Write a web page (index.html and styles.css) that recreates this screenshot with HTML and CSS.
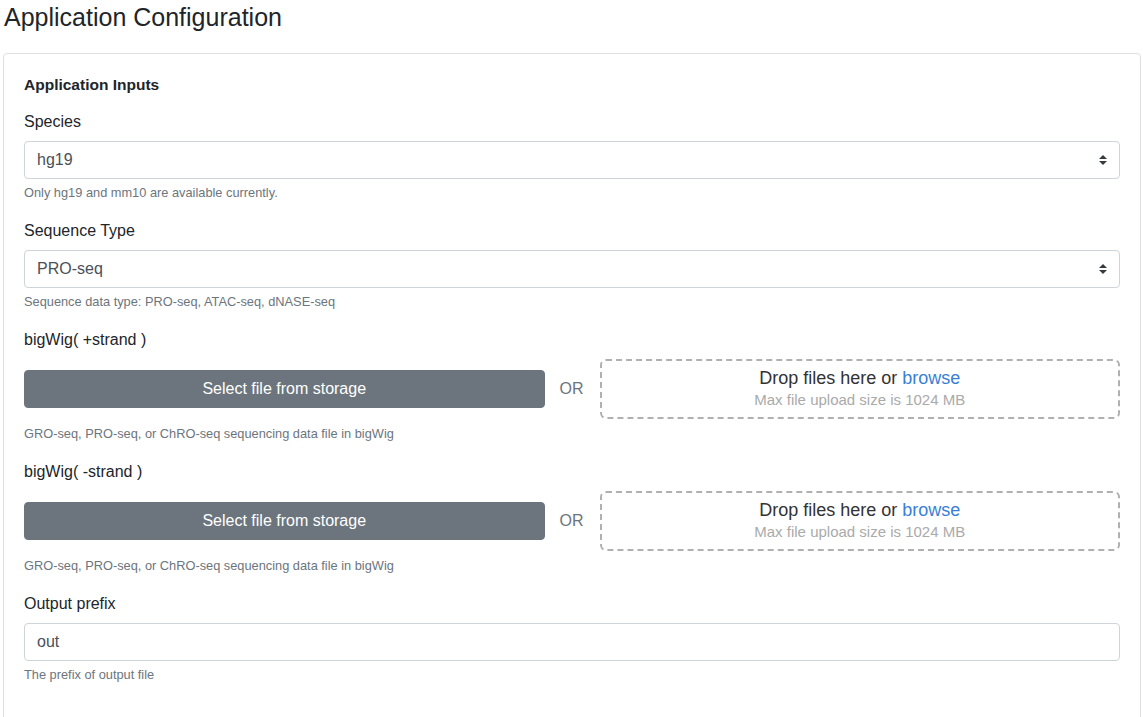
FILE: index.html
```html
<!DOCTYPE html>
<html lang="en">
<head>
<meta charset="utf-8">
<title>Application Configuration</title>
<link rel="stylesheet" href="styles.css">
</head>
<body>
<h4 class="page-title">Application Configuration</h4>
<div class="card">
  <div class="card-body">
    <div class="section-title">Application Inputs</div>

    <div class="form-group">
      <label class="form-label">Species</label>
      <div class="select">hg19</div>
      <small class="help">Only hg19 and mm10 are available currently.</small>
    </div>

    <div class="form-group">
      <label class="form-label">Sequence Type</label>
      <div class="select">PRO-seq</div>
      <small class="help">Sequence data type: PRO-seq, ATAC-seq, dNASE-seq</small>
    </div>

    <div class="form-group">
      <label class="form-label">bigWig( +strand )</label>
      <div class="file-row">
        <button class="btn-storage" type="button">Select file from storage</button>
        <span class="or">OR</span>
        <div class="dropzone">
          <div class="dz-main">Drop files here or <span class="dz-link">browse</span></div>
          <div class="dz-sub">Max file upload size is 1024 MB</div>
        </div>
      </div>
      <small class="help help-file">GRO-seq, PRO-seq, or ChRO-seq sequencing data file in bigWig</small>
    </div>

    <div class="form-group">
      <label class="form-label">bigWig( -strand )</label>
      <div class="file-row">
        <button class="btn-storage" type="button">Select file from storage</button>
        <span class="or">OR</span>
        <div class="dropzone">
          <div class="dz-main">Drop files here or <span class="dz-link">browse</span></div>
          <div class="dz-sub">Max file upload size is 1024 MB</div>
        </div>
      </div>
      <small class="help help-file">GRO-seq, PRO-seq, or ChRO-seq sequencing data file in bigWig</small>
    </div>

    <div class="form-group">
      <label class="form-label">Output prefix</label>
      <div class="input">out</div>
      <small class="help">The prefix of output file</small>
    </div>
  </div>
</div>
</body>
</html>
```

FILE: styles.css
```css
* { box-sizing: border-box; }

html, body {
  margin: 0;
  padding: 0;
  background: #fff;
}

body {
  padding: 0 2px 0 3px;
  font-family: "Liberation Sans", Arial, sans-serif;
  font-size: 16px;
  line-height: 1.5;
  color: #212529;
  overflow: hidden;
}

.page-title {
  margin: 2px 0 21px 1px;
  font-size: 25px;
  font-weight: 400;
  line-height: 30px;
  color: #212529;
}

.card {
  border: 1px solid #dfdfdf;
  border-radius: 4px;
  background: #fff;
  min-height: 700px;
}

.card-body {
  padding: 20px;
}

.section-title {
  padding-top: 1px;
  font-size: 15.5px;
  font-weight: 700;
  line-height: 20px;
  margin-bottom: 14px;
  color: #212529;
}

.form-group {
  margin-bottom: 16px;
}

.form-label {
  display: block;
  padding-top: 1px;
  margin-bottom: 7px;
  line-height: 24px;
}

.select,
.input {
  height: 38px;
  padding: 6px 28px 6px 12px;
  border: 1px solid #ced4da;
  border-radius: 4px;
  line-height: 24px;
  color: #495057;
  background: #fff;
}

.select {
  background-image: url("data:image/svg+xml,%3Csvg xmlns='http://www.w3.org/2000/svg' width='4' height='5' viewBox='0 0 4 5'%3E%3Cpath fill='%23343a40' d='M2 0L0 2h4zm0 5L0 3h4z'/%3E%3C/svg%3E");
  background-repeat: no-repeat;
  background-position: right 12px center;
  background-size: 8px 10px;
}

.help {
  display: block;
  margin-top: 5px;
  font-size: 12.8px;
  line-height: 18px;
  color: #6c757d;
}

.help-file {
  margin-top: 6px;
}

.file-row {
  display: grid;
  grid-template-columns: 1fr auto 1fr;
  align-items: center;
}

.btn-storage {
  min-width: 0;
  height: 38px;
  border: 1px solid #6c757d;
  border-radius: 4px;
  background: #6c757d;
  color: #fff;
  font-family: inherit;
  font-size: 16px;
  line-height: 24px;
  padding: 6px 12px;
}

.or {
  padding: 0 16px 0 15px;
  color: #6c757d;
  font-size: 16px;
}

.dropzone {
  min-width: 0;
  height: 60px;
  border: 2px dashed #b0b0b0;
  border-radius: 6px;
  display: flex;
  flex-direction: column;
  align-items: center;
  justify-content: center;
  text-align: center;
}

.dz-main {
  font-size: 18px;
  line-height: 22px;
  color: #333;
}

.dz-link {
  color: #3a7fd5;
}

.dz-sub {
  font-size: 15px;
  line-height: 22px;
  color: #aaa;
}
```
